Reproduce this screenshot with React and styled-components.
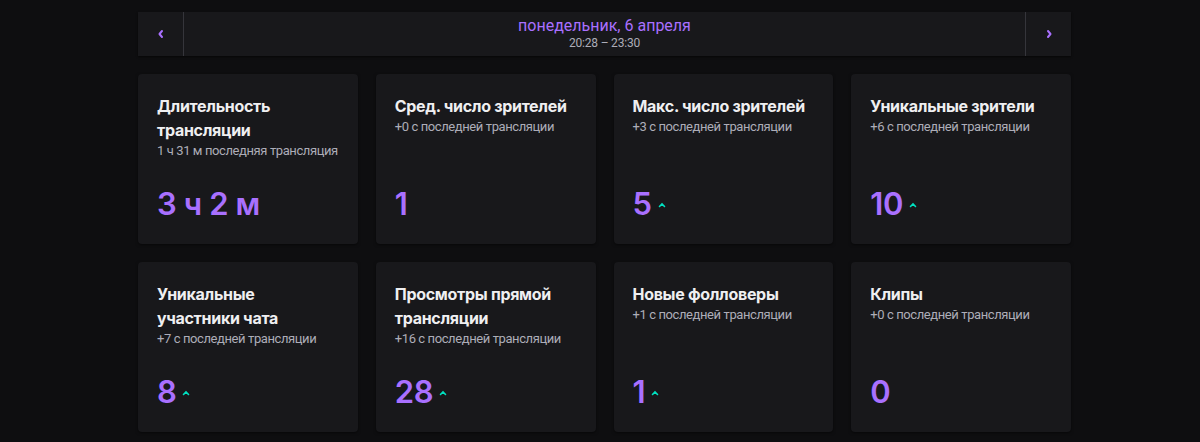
import React from 'react'
import styled, { createGlobalStyle } from 'styled-components'

const GlobalStyle = createGlobalStyle`
  html, body {
    margin: 0;
    padding: 0;
    background: #0e0e10;
    font-family: Inter, "Noto Sans", sans-serif;
    color: #efeff1;
  }
`

const stats = [
  { title: 'Длительность трансляции', sub: '1 ч 31 м последняя трансляция', value: '3 ч 2 м' },
  { title: 'Сред. число зрителей', sub: '+0 с последней трансляции', value: '1' },
  { title: 'Макс. число зрителей', sub: '+3 с последней трансляции', value: '5', up: true },
  { title: 'Уникальные зрители', sub: '+6 с последней трансляции', value: '10', up: true },
  { title: 'Уникальные участники чата', sub: '+7 с последней трансляции', value: '8', up: true },
  { title: 'Просмотры прямой трансляции', sub: '+16 с последней трансляции', value: '28', up: true },
  { title: 'Новые фолловеры', sub: '+1 с последней трансляции', value: '1', up: true },
  { title: 'Клипы', sub: '+0 с последней трансляции', value: '0' },
]

const Chevron = ({ dir }) => (
  <svg width="8" height="10" viewBox="0 0 8 10">
    <path
      d={dir === 'left' ? 'M5 2 L2.5 5 L5 8' : 'M3 2 L5.5 5 L3 8'}
      fill="none"
      stroke="#a970ff"
      strokeWidth="2"
      strokeLinecap="round"
      strokeLinejoin="round"
    />
  </svg>
)

const Caret = () => (
  <svg width="8" height="6" viewBox="0 0 8 6">
    <path d="M1.5 4.5 L4 2 L6.5 4.5" fill="none" stroke="#00e0c0" strokeWidth="1.6" strokeLinecap="round" />
  </svg>
)

const App = () => {
  return (
    <Page>
      <GlobalStyle />
      <Wrapper>
        <DateBar>
          <NavButton><Chevron dir="left" /></NavButton>
          <DateInfo>
            <DateTitle>понедельник, 6 апреля</DateTitle>
            <DateTime>20:28 – 23:30</DateTime>
          </DateInfo>
          <NavButton right><Chevron dir="right" /></NavButton>
        </DateBar>
        <Grid>
          {stats.map((s) => (
            <Card key={s.title}>
              <Title>{s.title}</Title>
              <Sub>{s.sub}</Sub>
              <ValueRow>
                <Value>{s.value}</Value>
                {s.up && <CaretBox><Caret /></CaretBox>}
              </ValueRow>
            </Card>
          ))}
        </Grid>
      </Wrapper>
    </Page>
  )
}

export default App

const Page = styled.div`
  min-height: 442px;
  padding: 12px 0 0 138px;
  box-sizing: border-box;
`

const Wrapper = styled.div`
  width: 933px;
  display: flex;
  flex-direction: column;
  gap: 18px;
`

const DateBar = styled.div`
  display: flex;
  height: 44px;
  background: #18181b;
  box-shadow: 0 1px 2px rgba(0, 0, 0, 0.6);
`

const NavButton = styled.div`
  width: 45px;
  display: flex;
  align-items: center;
  justify-content: center;
  border-left: ${(p) => (p.right ? '1px solid #35353b' : 'none')};
  border-right: ${(p) => (p.right ? 'none' : '1px solid #35353b')};
`

const DateInfo = styled.div`
  flex: 1;
  display: flex;
  flex-direction: column;
  align-items: center;
  justify-content: center;
  padding-bottom: 2px;
`

const DateTitle = styled.div`
  font-family: Roboto, "Noto Sans", sans-serif;
  font-size: 16px;
  line-height: 20px;
  color: #a970ff;
`

const DateTime = styled.div`
  font-family: Roboto, "Noto Sans", sans-serif;
  font-size: 12px;
  line-height: 14px;
  letter-spacing: -0.2px;
  color: #adadb8;
`

const Grid = styled.div`
  display: grid;
  grid-template-columns: repeat(4, 1fr);
  gap: 18px;
`

const Card = styled.div`
  height: 170px;
  box-sizing: border-box;
  padding: 20px 19px 25px;
  background: #18181b;
  border-radius: 4px;
  box-shadow: 0 1px 3px rgba(0, 0, 0, 0.5);
  display: flex;
  flex-direction: column;
`

const Title = styled.div`
  font-size: 16px;
  font-weight: 700;
  line-height: 24px;
  letter-spacing: -0.3px;
  color: #efeff1;
`

const Sub = styled.div`
  font-family: Roboto, "Noto Sans", sans-serif;
  font-size: 13px;
  line-height: 18px;
  letter-spacing: -0.4px;
  white-space: nowrap;
  color: #adadb8;
`

const ValueRow = styled.div`
  margin-top: auto;
  display: flex;
  align-items: flex-end;
  gap: 6px;
`

const Value = styled.div`
  font-size: 31px;
  font-weight: 600;
  line-height: 31px;
  letter-spacing: -0.4px;
  color: #a970ff;
`

const CaretBox = styled.div`
  display: flex;
  padding-bottom: 11px;
`
